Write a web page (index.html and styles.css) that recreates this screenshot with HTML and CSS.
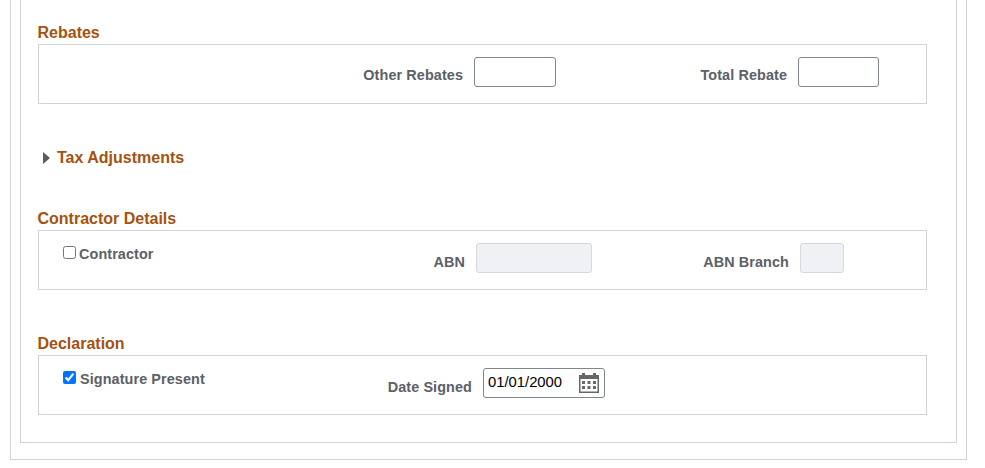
FILE: index.html
```html
<!DOCTYPE html>
<html lang="en">
<head>
  <meta charset="UTF-8" />
  <title>Tax Details</title>
  <link rel="stylesheet" href="styles.css">
</head>
<body>
  <div class="outer">
    <div class="inner">
      <section class="group group-rebates">
        <h2>Rebates</h2>
        <div class="box">
          <div class="cell cell-rebate">
            <label class="field-label">Other Rebates</label>
            <input type="text" class="input input-rebate" />
          </div>
          <div class="cell cell-total">
            <label class="field-label">Total Rebate</label>
            <input type="text" class="input input-total" />
          </div>
        </div>
      </section>

      <div class="collapsed">
        <span class="arrow"></span>
        <h2>Tax Adjustments</h2>
      </div>

      <section class="group group-contractor">
        <h2>Contractor Details</h2>
        <div class="box">
          <label class="check">
            <input type="checkbox" />
            <span>Contractor</span>
          </label>
          <div class="cell cell-abn">
            <label class="field-label field-label-low">ABN</label>
            <input type="text" class="input input-abn" disabled />
          </div>
          <div class="cell cell-branch">
            <label class="field-label field-label-low">ABN Branch</label>
            <input type="text" class="input input-branch" disabled />
          </div>
        </div>
      </section>

      <section class="group group-declaration">
        <h2>Declaration</h2>
        <div class="box">
          <label class="check check-signature">
            <input type="checkbox" checked />
            <span>Signature Present</span>
          </label>
          <div class="cell cell-date">
            <label class="field-label field-label-low">Date Signed</label>
            <div class="date-input">
              <input type="text" value="01/01/2000" />
              <svg width="20" height="20" viewBox="0 0 20 20">
                <path fill="#666" d="M0 2h3V0h3v2h8V0h3v2h3v18H0z"/>
                <rect x="1.5" y="6" width="17" height="12.5" fill="#fff"/>
                <g fill="#666">
                  <rect x="3" y="8" width="3" height="3"/>
                  <rect x="8.5" y="8" width="3" height="3"/>
                  <rect x="14" y="8" width="3" height="3"/>
                  <rect x="3" y="13" width="3" height="3"/>
                  <rect x="8.5" y="13" width="3" height="3"/>
                  <rect x="14" y="13" width="3" height="3"/>
                </g>
              </svg>
            </div>
          </div>
        </div>
      </section>
    </div>
  </div>
</body>
</html>
```

FILE: styles.css
```css
body {
  margin: 0;
  font-family: "Liberation Sans", Arial, sans-serif;
  background: #fff;
}
.outer {
  width: 946px;
  margin-left: 10px;
  padding-left: 9px;
  border: 1px solid #d0d4da;
  border-top: none;
  padding-bottom: 16px;
}
.inner {
  width: 935px;
  height: 442px;
  border: 1px solid #d0d4da;
  border-top: none;
}
h2 {
  margin: 0 0 0 -0.5px;
  font-size: 16px;
  line-height: 20px;
  font-weight: bold;
  color: #a5520f;
}
.group {
  margin-left: 17px;
  width: 889px;
}
.group h2 {
  margin-bottom: 1px;
}
.group-rebates {
  padding-top: 23px;
}
.group-contractor {
  margin-top: 41px;
}
.group-declaration {
  margin-top: 44px;
}
.box {
  display: flex;
  height: 60px;
  box-sizing: border-box;
  padding-top: 12px;
  border: 1px solid #d0d4da;
}
.cell {
  display: flex;
  justify-content: flex-end;
  flex-shrink: 0;
}
.cell-rebate { width: 517px; }
.cell-total { width: 323px; }
.cell-abn { width: 304px; }
.cell-branch { width: 252px; }
.cell-date { width: 328px; }
.field-label {
  font-size: 14.4px;
  font-weight: bold;
  line-height: 18px;
  letter-spacing: 0.1px;
  color: #5c6067;
  margin-top: 9px;
  margin-right: 11px;
}
.field-label-low {
  margin-top: 10px;
}
.input {
  height: 30px;
  box-sizing: border-box;
  border: 1px solid #7f8790;
  border-radius: 3px;
  background: #fff;
  padding: 0 4px;
}
.input-rebate { width: 82px; }
.input-total { width: 81px; }
.input-abn { width: 116px; }
.input-branch { width: 44px; }
.input:disabled {
  background: #f0f1f4;
  border-color: #d5d9de;
}
.check {
  display: flex;
  align-items: flex-start;
  width: 225px;
  margin-left: 24px;
  flex-shrink: 0;
  font-size: 14.4px;
  font-weight: bold;
  line-height: 18px;
  letter-spacing: 0.1px;
  color: #5c6067;
  padding-top: 2px;
}
.check input {
  width: 13px;
  height: 13px;
  margin: 1px 3px 0 0;
}
.check-signature input {
  margin-right: 4px;
}
.check-signature {
  width: 214px;
}
.collapsed {
  display: flex;
  align-items: center;
  margin: 44px 0 0 22px;
  gap: 7px;
}
.collapsed h2 {
  margin-left: 0;
}
.arrow {
  width: 0;
  height: 0;
  border-left: 7px solid #5c5c5c;
  border-top: 6.5px solid transparent;
  border-bottom: 6.5px solid transparent;
}
.date-input {
  display: flex;
  align-items: center;
  width: 122px;
  height: 30px;
  box-sizing: border-box;
  border: 1px solid #7f8790;
  border-radius: 3px;
  padding-left: 4px;
}
.date-input input {
  width: 91px;
  height: 26px;
  padding: 0;
  border: none;
  outline: none;
  font-family: "Liberation Sans", Arial, sans-serif;
  font-size: 14.8px;
  color: #000;
  margin-bottom: 2px;
}
.date-input svg {
  flex-shrink: 0;
}
```
